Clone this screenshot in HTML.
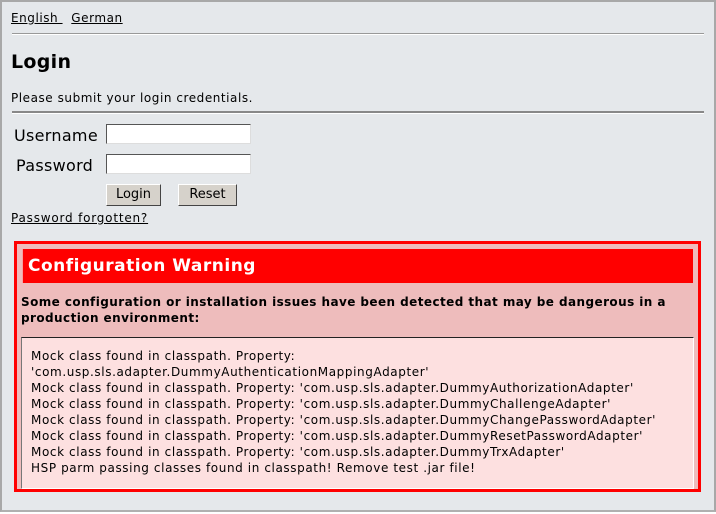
<!DOCTYPE html>
<html><head><style>
body{margin:0;width:716px;height:514px;overflow:hidden;background:#fff;font-family:"DejaVu Sans",Verdana,sans-serif;font-size:12px;color:#000;letter-spacing:0.55px}
.pg{position:absolute;left:0;top:0;width:712px;height:508px;background:#e5e8eb;border:2px solid #a8a8a8;border-bottom:2px solid #b0b0b0}
.a{position:absolute;white-space:nowrap}
a{color:#000;text-decoration:underline}
.hr{position:absolute;left:10px;right:10px;height:0;border-top:1px solid #888;border-bottom:1px solid #fff}
input.t{position:absolute;width:145px;height:20px;border:1px solid;border-color:#555 #ddd #ddd #555;background:#fff;box-sizing:border-box;padding:0}
.b{position:absolute;height:22px;background:#d6d2cb;border:1px solid;border-color:#fff #444 #444 #fff;box-sizing:border-box;text-align:center;line-height:19px;font-size:13px;letter-spacing:0}
</style></head><body>
<div class="pg">
<div class="a" style="left:9px;top:9px"><a>English </a>&nbsp; <a>German</a></div>
<div class="hr" style="top:31px;border-top-color:#999"></div>
<div class="a" style="left:9px;top:49px;font-size:19px;font-weight:bold;letter-spacing:0.3px">Login</div>
<div class="a" style="left:9px;top:89px">Please submit your login credentials.</div>
<div class="hr" style="top:109px;border-top:2px solid #888"></div>
<div class="a" style="left:12px;top:124px;font-size:16px;letter-spacing:0.3px">Username</div>
<div class="a" style="left:14px;top:154px;font-size:16px;letter-spacing:0.3px">Password</div>
<input class="t" style="left:104px;top:122px">
<input class="t" style="left:104px;top:152px">
<div class="b" style="left:104px;top:182px;width:55px">Login</div>
<div class="b" style="left:176px;top:182px;width:59px">Reset</div>
<div class="a" style="left:9px;top:209px;letter-spacing:0.8px"><a>Password forgotten?</a></div>
<div style="position:absolute;left:12px;top:239px;width:687px;height:251px;box-sizing:border-box;border:3px solid #f00;background:#eebcbc">
 <div style="position:absolute;left:5px;top:5px;width:671px;height:34px;background:#f00;color:#fff;font-weight:bold;font-size:17px;line-height:34px;padding-left:5px;box-sizing:border-box;border-left:1px solid #f8a0a0;letter-spacing:0.5px">Configuration Warning</div>
 <div style="position:absolute;left:4px;top:50px;font-weight:bold;line-height:16px;width:670px;letter-spacing:0.43px">Some configuration or installation issues have been detected that may be dangerous in a production environment:</div>
 <div style="position:absolute;left:4px;top:93px;width:673px;height:152px;box-sizing:border-box;border:1px solid;border-color:#222 #fff #fff #777;background:#fde0e0;padding:10px 0 0 9px;line-height:16px;white-space:nowrap;letter-spacing:0.6px">
Mock class found in classpath. Property:<br>'com.usp.sls.adapter.DummyAuthenticationMappingAdapter'<br>Mock class found in classpath. Property: 'com.usp.sls.adapter.DummyAuthorizationAdapter'<br>Mock class found in classpath. Property: 'com.usp.sls.adapter.DummyChallengeAdapter'<br>Mock class found in classpath. Property: 'com.usp.sls.adapter.DummyChangePasswordAdapter'<br>Mock class found in classpath. Property: 'com.usp.sls.adapter.DummyResetPasswordAdapter'<br>Mock class found in classpath. Property: 'com.usp.sls.adapter.DummyTrxAdapter'<br>HSP parm passing classes found in classpath! Remove test .jar file!
 </div>
</div>
</div>
</body></html>
